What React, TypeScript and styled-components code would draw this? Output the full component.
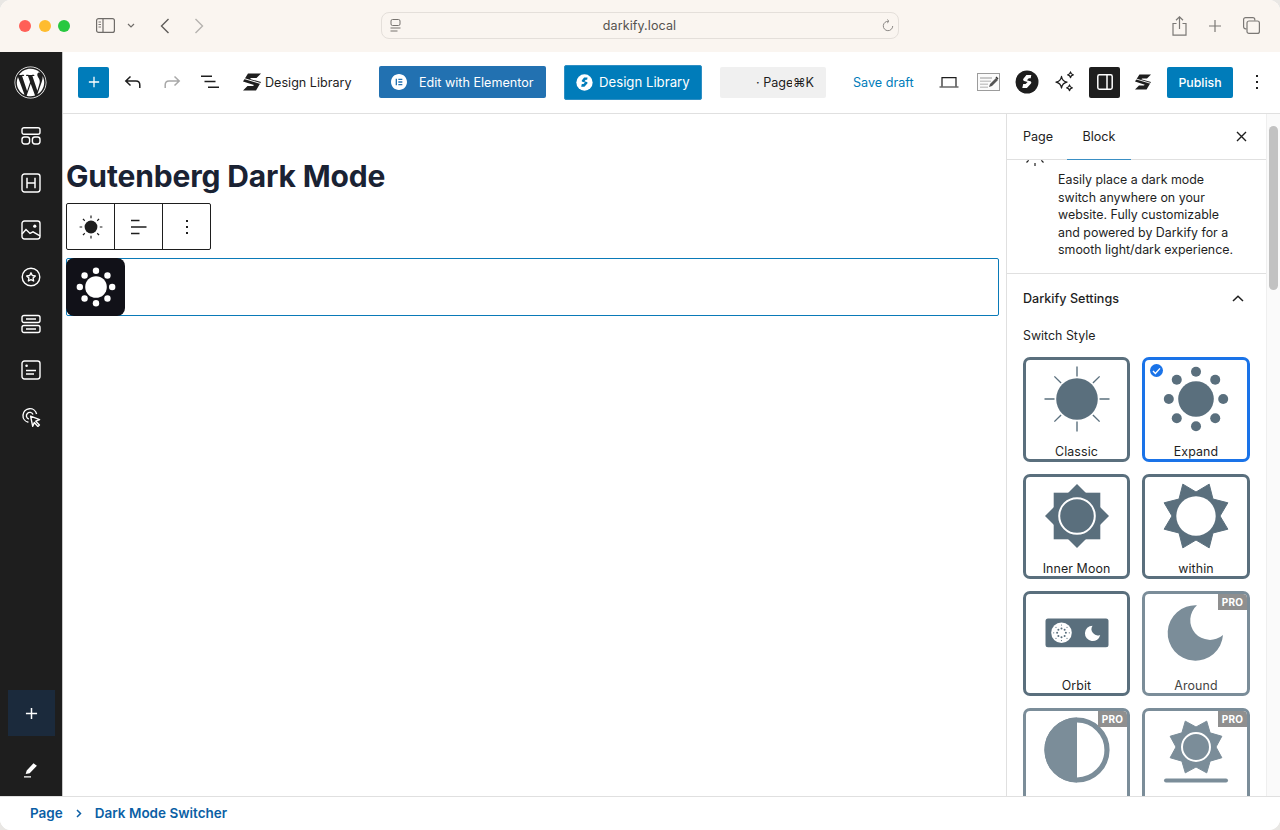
import React from "react";
import styled, { createGlobalStyle } from "styled-components";
import { FaWordpress } from "react-icons/fa";
import { SiElementor } from "react-icons/si";

const Global = createGlobalStyle`
  html, body { margin: 0; padding: 0; background: #e9e7e4; }
  body { font-family: Inter, "Liberation Sans", sans-serif; color: #1e1e1e; -webkit-font-smoothing: antialiased; }
  * { box-sizing: border-box; }
`;

const Win = styled.div`
  width: 1280px; height: 830px; overflow: hidden; border-radius: 11px;
  display: flex; flex-direction: column; background: #fff;
`;
const Chrome = styled.header`
  height: 52px; flex: none; background: #faf5f0; display: flex; align-items: center; padding-left: 19px; padding-bottom: 1px;
`;
const Light = styled.span<{ $c: string }>`
  width: 12px; height: 12px; border-radius: 50%; background: ${p => p.$c}; margin-right: 7.5px; flex: none;
`;
const ChromeSlot = styled.span<{ $w: number; $ml?: number; $gray?: boolean }>`
  width: ${p => p.$w}px; margin-left: ${p => p.$ml ?? 0}px; flex: none; display: flex; align-items: center; justify-content: center;
  color: ${p => (p.$gray ? "#b5b2af" : "#6f6c69")};
`;
const Address = styled.div`
  width: 518px; height: 27px; margin-left: 176px; flex: none; border: 1px solid #e4dfda; border-radius: 8px;
  display: flex; align-items: center; justify-content: space-between; padding: 0 1px 0 8px; font-size: 12.5px; color: #55524f; letter-spacing: .1px;
`;
const Body = styled.div`flex: 1; display: flex; min-height: 0;`;
const Rail = styled.nav`
  width: 63px; flex: none; background: #1e1e1e; border-right: 1px solid #c9c9c9; display: flex; flex-direction: column; color: #fff;
`;
const RailLogo = styled.div`height: 61px; flex: none; display: flex; align-items: center; justify-content: center; padding-right: 1px;`;
const RailItem = styled.div`
  height: 46.8px; width: 62px; flex: none; display: flex; align-items: center; justify-content: center;
`;
const RailSpacer = styled.div`flex: 1;`;
const RailAdd = styled.div`
  width: 47px; height: 46px; margin-left: 8px; background: #1b2a3c; display: flex; align-items: center; justify-content: center; flex: none;
`;
const RailEdit = styled.div`height: 60px; flex: none; display: flex; align-items: center; justify-content: center; padding-right: 1px; padding-top: 8px;`;
const Column = styled.div`flex: 1; min-width: 0; display: flex; flex-direction: column;`;
const TopBar = styled.div`
  height: 62px; flex: none; border-bottom: 1px solid #e0e0e0; display: flex; align-items: center; padding-left: 15px; padding-bottom: 1px;
  font-size: 13px;
`;
const Inserter = styled.div`
  width: 31px; height: 31px; background: #007cba; border-radius: 2px; color: #fff; flex: none; display: flex; align-items: center; justify-content: center;
`;
const Slot = styled.div<{ $w: number; $ml?: number }>`
  width: ${p => p.$w}px; margin-left: ${p => p.$ml ?? 0}px; height: 32px; flex: none; display: flex; align-items: center; justify-content: center;
`;
const LibLabel = styled.span`font-size: 12.6px; color: #1e1e1e; width: 114px; margin-left: 4px; flex: none; white-space: nowrap;`;
const ElementorBtn = styled.div`
  width: 167px; height: 32px; background: #2271b1; border-radius: 2px; flex: none; color: #fff; display: flex; align-items: center; padding-left: 12px; gap: 12px; font-size: 12.6px;
  svg { flex: none; }
`;
const LibraryBtn = styled.div`
  width: 138px; height: 35px; margin-left: 18px; background: #007cba; border: 1px solid #2f8fc4; border-radius: 2px; flex: none; color: #fff; display: flex; align-items: center; padding-left: 11px; gap: 6px; font-size: 13.2px;
`;
const Search = styled.div`
  width: 106px; height: 31px; margin-left: 18px; background: #f0f0f0; border-radius: 2px; flex: none; display: flex; align-items: center; padding-left: 36px; font-size: 12.6px; color: #1e1e1e;
`;
const SearchText = styled.span`width: 36px; overflow: hidden; white-space: nowrap; flex: none; margin-right: 1px;`;
const SaveDraft = styled.span`font-size: 12.6px; color: #007cba; margin-left: 27px; width: 60px; white-space: nowrap; flex: none;`;
const ActiveSlot = styled.div`
  width: 31px; height: 31px; border-radius: 2px; background: #1e1e1e; color: #fff; flex: none; margin-left: 13px; display: flex; align-items: center; justify-content: center;
`;
const Publish = styled.div`
  width: 66px; height: 31px; margin-left: 16px; background: #007cba; color: #fff; border-radius: 2px; flex: none; display: flex; align-items: center; justify-content: center; font-size: 12.3px; font-weight: 500;
`;
const Main = styled.div`flex: 1; min-height: 0; display: flex;`;
const Canvas = styled.main`flex: 1; min-width: 0; padding: 0 7px 0 3px;`;
const Title = styled.h1`
  margin: 44px 0 0; font-size: 30px; line-height: 36px; font-weight: 700; color: #1a2233; letter-spacing: -.15px; height: 45px;
`;
const BlockTools = styled.div`
  width: 145px; height: 47px; border: 1px solid #1e1e1e; border-radius: 2px; display: flex; background: #fff;
`;
const ToolCell = styled.div`
  flex: 1; display: flex; align-items: center; justify-content: center;
  & + & { border-left: 1px solid #1e1e1e; }
`;
const BlockFrame = styled.div`
  margin-top: 8px; height: 58px; border: 1px solid #0a7ab8; border-radius: 2px; display: flex; background: #fff;
`;
const SwitchBox = styled.div`
  width: 59px; height: 58px; margin: -1px 0 0 -1px; background: #111118; border-radius: 8px; display: flex; align-items: center; justify-content: center; flex: none;
`;
const Panel = styled.aside`
  width: 260px; flex: none; border-left: 1px solid #e0e0e0; display: flex; flex-direction: column; min-height: 0;
`;
const Tabs = styled.div`
  height: 46px; flex: none; border-bottom: 1px solid #e0e0e0; display: flex; align-items: center; padding-left: 16px; font-size: 12.6px;
`;
const Tab = styled.span<{ $active?: boolean; $w: number }>`
  width: ${p => p.$w}px; height: 46px; display: flex; align-items: center; flex: none; justify-content: ${p => (p.$active ? "center" : "flex-start")};
  border-bottom: ${p => (p.$active ? "1.5px solid #3a8fc4" : "0")};
`;
const TabClose = styled.span`margin-left: auto; margin-right: 19px; display: flex;`;
const PanelScroll = styled.div`flex: 1; min-height: 0; overflow: hidden;`;
const Intro = styled.div`
  height: 114px; border-bottom: 1px solid #e0e0e0; display: flex; padding: 0 0 0 18px;
`;
const IntroIcon = styled.div`width: 33px; flex: none; height: 8px; overflow: hidden; display: flex; align-items: flex-end;`;
const IntroText = styled.p`
  margin: 11px 0 0; font-size: 12.4px; line-height: 17.6px; color: #1e1e1e; width: 205px; white-space: nowrap;
`;
const SectionHead = styled.div`
  height: 48px; padding: 0 22px 0 16px; display: flex; align-items: center; justify-content: space-between; font-size: 12.6px; font-weight: 500; color: #1e1e1e;
`;
const FieldLabel = styled.div`padding: 6px 16px 0; font-size: 12.4px; height: 35px; color: #1e1e1e;`;
const Grid = styled.div`
  display: grid; grid-template-columns: 107px 108px; gap: 12px; padding-left: 16px;
`;
const Card = styled.div<{ $on?: boolean; $pro?: boolean }>`
  position: relative; height: 105px; border: 3px solid ${p => (p.$on ? "#1a73e8" : p.$pro ? "#7b8d99" : "#5a6f7d")}; border-radius: 7px;
  display: flex; flex-direction: column; align-items: center; font-size: 12.4px; color: ${p => (p.$pro ? "#444" : "#1e1e1e")}; overflow: hidden; background: #fff;
`;
const CardArt = styled.div`height: 80px; width: 100%; flex: none; display: flex; align-items: center; justify-content: center; margin-top: -1px;`;
const CardName = styled.span`line-height: 16px; margin-top: 5px; letter-spacing: .1px;`;
const Pro = styled.span`
  position: absolute; top: 0; right: 0; width: 29px; height: 16px; background: #8f8f8f; color: #fff; font-size: 10px; font-weight: 700; letter-spacing: .3px;
  display: flex; align-items: center; justify-content: center; border-radius: 0 3px 0 0;
`;
const Check = styled.span`
  position: absolute; top: 4px; left: 5px; width: 13px; height: 13px; border-radius: 50%; background: #1a73e8; display: flex; align-items: center; justify-content: center;
`;
const ScrollTrack = styled.div`
  width: 14px; flex: none; background: #fafafa; border-left: 1px solid #efefef; padding: 12px 0 0 2px;
`;
const ScrollThumb = styled.div`width: 9px; height: 164px; border-radius: 5px; background: #c2c2c2;`;
const Footer = styled.footer`
  height: 34px; flex: none; border-top: 1px solid #e0e0e0; background: #fff; display: flex; align-items: center; padding: 0 0 1px 30px; font-size: 13.5px; font-weight: 600; color: #0b5fa5;
`;
const Crumb = styled.span`display: flex; width: 32px; justify-content: center; flex: none;`;

/* ---------- drawings ---------- */
const I = styled.svg`display: block; flex: none;`;

const SLogo = ({ c = "#1e1e1e", w = 18 }: { c?: string; w?: number }) => (
  <I width={w} height={w} viewBox="0 0 18 18" fill={c}>
    <path d="M5 .5h13l-4.500 4.500H8l-1 1 11 3-5 8.500H0l4.500-4.500H10l1-1L0 8.500z" />
    <path d="M1 5.500l16.500 5" stroke="#fff" strokeWidth="1" fill="none" />
  </I>
);
const SCircle = () => (
  <I width="24" height="24" viewBox="0 0 24 24">
    <circle cx="12" cy="12" r="11.500" fill="#1e1e1e" />
    <path d="M15.700 5.500h-4.900l-3 3.600c-.6.800-.3 1.900.7 2.200l3.500 1-2 2.200H7.600l-.9 4h4.600l4.100-4.600c.7-.9.3-2-.7-2.300l-3.400-.9 1.900-2.100h1.900z" fill="#fff" transform="translate(.6 -.4)" />
  </I>
);
const Rays = ({ cx, cy, r0, r1, diag0, diag1, c, sw }: { cx: number; cy: number; r0: number; r1: number; diag0?: number; diag1?: number; c: string; sw: number }) => (
  <g stroke={c} strokeWidth={sw}>
    {[0, 45, 90, 135, 180, 225, 270, 315].map(a => {
      const t = (a * Math.PI) / 180;
      const d = a % 90 !== 0;
      const i = d && diag0 ? diag0 : r0;
      const o = d && diag1 ? diag1 : r1;
      return <line key={a} x1={cx + Math.cos(t) * i} y1={cy + Math.sin(t) * i} x2={cx + Math.cos(t) * o} y2={cy + Math.sin(t) * o} />;
    })}
  </g>
);
const dots = (cx: number, cy: number, d: number, r: number, c: string) =>
  [0, 45, 90, 135, 180, 225, 270, 315].map(a => {
    const t = (a * Math.PI) / 180;
    return <circle key={a} cx={cx + Math.cos(t) * d} cy={cy + Math.sin(t) * d} r={r} fill={c} />;
  });
const star = (cx: number, cy: number, ro: number, ri: number, off: number) => {
  const pts: string[] = [];
  for (let k = 0; k < 16; k++) {
    const t = ((off + k * 22.5 - 90) * Math.PI) / 180;
    const r = k % 2 === 0 ? ro : ri;
    pts.push(`${(cx + Math.cos(t) * r).toFixed(2)},${(cy + Math.sin(t) * r).toFixed(2)}`);
  }
  return pts.join(" ");
};
const ART = "#5a6f7d";
const ART_PRO = "#7b8d99";

const ClassicArt = () => (
  <I width="70" height="70" viewBox="0 0 70 70">
    <Rays cx={35} cy={35} r0={22.5} r1={32.5} diag0={22.5} diag1={32} c={ART} sw={1.4} />
    <circle cx="35" cy="35" r="20.8" fill={ART} />
  </I>
);
const ExpandArt = () => (
  <I width="70" height="70" viewBox="0 0 70 70">
    <circle cx="35" cy="35" r="17.8" fill={ART} />
    {dots(35, 35, 27.2, 5, ART)}
  </I>
);
const InnerMoonArt = () => (
  <I width="70" height="70" viewBox="0 0 70 70">
    <rect x="11.7" y="11.7" width="46.6" height="46.6" fill={ART} />
    <polygon points="35,3 67,35 35,67 3,35" fill={ART} />
    <circle cx="35" cy="35" r="17.8" fill={ART} stroke="#fff" strokeWidth="2" />
  </I>
);
const WithinArt = () => (
  <I width="70" height="70" viewBox="0 0 70 70">
    <polygon points={star(35, 35, 34.5, 24, 22.5)} fill={ART} stroke={ART} strokeWidth="1" strokeLinejoin="round" />
    <circle cx="35" cy="35" r="19.7" fill="#fff" />
  </I>
);
const OrbitArt = () => (
  <I width="64" height="30" viewBox="0 0 64 30">
    <rect x="0.5" y="0.5" width="63" height="28.7" rx="2.5" fill={ART} />
    <circle cx="16.5" cy="14.8" r="10.3" fill="#fff" />
    {dots(16.5, 14.8, 4.4, 1, ART)}
    {dots(16.5, 14.8, 7.8, 0.6, ART)}
    <path d="M47.5 7.7a7.7 7.7 0 1 0 7.7 9.2 6.3 6.3 0 0 1-7.7-9.2z" fill="#fff" />
  </I>
);
const AroundArt = () => (
  <I width="70" height="70" viewBox="0 0 70 70">
    <path d="M36 7.3A27.7 27.7 0 1 0 62 37 19.500 19.500 0 1 1 36 7.300z" fill={ART_PRO} />
  </I>
);
const HalfArt = () => (
  <I width="70" height="70" viewBox="0 0 70 70">
    <circle cx="35" cy="35" r="30" fill="#fff" stroke={ART_PRO} strokeWidth="5.2" />
    <path d="M35 2.4a32.6 32.6 0 0 0 0 65.2z" fill={ART_PRO} />
  </I>
);
const HorizonArt = () => (
  <I width="70" height="70" viewBox="0 0 70 70">
    <polygon points={star(35, 32, 28, 20, 22.5)} fill={ART_PRO} stroke={ART_PRO} strokeWidth="1" strokeLinejoin="round" />
    <circle cx="35" cy="32" r="14" fill={ART_PRO} stroke="#fff" strokeWidth="2" />
    <rect x="3" y="63.5" width="64" height="4" rx="2" fill={ART_PRO} />
  </I>
);

const ICON = { fill: "none", stroke: "#fff", strokeWidth: 1.4 };
const Patterns = () => (
  <I width="20" height="20" viewBox="0 0 20 20" {...ICON}>
    <rect x="1" y="1.7" width="18" height="6.6" rx="2" />
    <rect x="1" y="11" width="7.6" height="7" rx="2.4" />
    <rect x="11.4" y="11" width="7.6" height="7" rx="2.4" />
  </I>
);
const Heading = () => (
  <I width="20" height="20" viewBox="0 0 20 20" {...ICON}>
    <rect x="1" y="1" width="18" height="18" rx="2.4" />
    <path d="M6 4.8v10.4M14 4.8v10.4M6 10h8" strokeWidth="1.5" />
  </I>
);
const ImageI = () => (
  <I width="20" height="20" viewBox="0 0 20 20" {...ICON}>
    <rect x="1" y="1" width="18" height="18" rx="2.4" />
    <path d="M1 14l4-4.4 4 3.8 3-1.6 7 4" />
    <circle cx="13.8" cy="6.2" r="1.6" fill="#fff" stroke="none" />
  </I>
);
const StarCircle = () => (
  <I width="20" height="20" viewBox="0 0 20 20" {...ICON}>
    <circle cx="10" cy="10" r="8.8" />
    <path d="M10 5.8l1.3 2.7 3 .4-2.2 2.1.5 3L10 12.6 7.4 14l.5-3-2.2-2.1 3-.4z" strokeLinejoin="round" />
  </I>
);
const Rows = () => (
  <I width="20" height="20" viewBox="0 0 20 20" {...ICON}>
    <rect x="1" y="1.5" width="18" height="7" rx="2" />
    <rect x="1" y="11.5" width="18" height="7" rx="2" />
    <path d="M5 5h10M5 15h10" />
  </I>
);
const FormI = () => (
  <I width="20" height="20" viewBox="0 0 20 20" {...ICON}>
    <rect x="1" y="1" width="18" height="18" rx="2.4" />
    <circle cx="5.6" cy="5.8" r="1.3" fill="#fff" stroke="none" />
    <path d="M5 10.4h10M5 14h8" strokeWidth="1.5" />
  </I>
);
const Pointer = () => (
  <I width="20" height="20" viewBox="0 0 20 20" {...ICON}>
    <path d="M7.4 15.3A6.9 6.9 0 1 1 15.6 7" />
    <path d="M7.8 12a3.4 3.4 0 1 1 4.2-4.4" />
    <path d="M9.6 9.2l9 3.4-3.8 1.6 3.6 3.8-1.5 1.4-3.6-3.8-1.6 3.7z" strokeLinejoin="round" />
  </I>
);
const PlusI = ({ s = 14, c = "#fff", sw = 1.5 }: { s?: number; c?: string; sw?: number }) => (
  <I width={s} height={s} viewBox="0 0 14 14" fill="none" stroke={c} strokeWidth={sw}>
    <path d="M7 1v12M1 7h12" />
  </I>
);
const Undo = ({ c, flip }: { c: string; flip?: boolean }) => (
  <I width="18" height="14" viewBox="0 0 18 14" fill="none" stroke={c} strokeWidth="1.5" style={flip ? { transform: "scaleX(-1)" } : undefined}>
    <path d="M6.5 1.5L1.8 6l4.7 4.5M2 6h10c2.4 0 3.8 1.6 3.8 4v3" />
  </I>
);
const ListView = () => (
  <I width="18" height="14" viewBox="0 0 18 14" fill="none" stroke="#1e1e1e" strokeWidth="1.5">
    <path d="M0 1.3h11M3.500 6.600h11M7 12.300h11" />
  </I>
);
const Laptop = () => (
  <I width="20" height="12" viewBox="0 0 20 12" fill="none" stroke="#1e1e1e" strokeWidth="1.2">
    <path d="M3 10.200V1.600h14v8.600M.5 11h19" />
  </I>
);
const Notes = () => (
  <I width="23" height="18" viewBox="0 0 23 18">
    <rect x=".5" y=".5" width="22" height="17" fill="#fbfbfb" stroke="#9c9c9c" />
    <path d="M3 4h12v2H3zM3 7.500h11v1.500H3zM3 10.500h8V12H3zM3 13.500h8V15H3z" fill="#c9c9c9" />
    <path d="M12 14l1-3 6-6 2 2-6 6z" fill="#555" />
    <path d="M19.500 3.500l2 2-1 1-2-2z" fill="#333" />
  </I>
);
const Sparkles = () => (
  <I width="21" height="22" viewBox="0 0 21 22" fill="none" stroke="#1e1e1e" strokeWidth="1.3" strokeLinejoin="round">
    <path d="M7.500 5.500c.6 3.500 2 5 5.500 5.700-3.500.7-4.900 2.200-5.500 5.800-.6-3.600-2-5.100-5.500-5.800 3.500-.7 4.900-2.200 5.500-5.700z" transform="translate(-1 0)" />
    <path d="M15.500 1c.3 1.700 1 2.400 2.800 2.800-1.800.3-2.500 1-2.800 2.800-.3-1.800-1-2.500-2.800-2.800 1.800-.4 2.500-1.100 2.800-2.800zM14.500 14c.3 1.700 1 2.400 2.800 2.800-1.800.3-2.500 1-2.800 2.800-.3-1.800-1-2.500-2.800-2.800 1.800-.4 2.500-1.100 2.800-2.800z" />
  </I>
);
const PanelToggle = ({ c = "#fff" }: { c?: string }) => (
  <I width="16" height="16" viewBox="0 0 16 16" fill="none" stroke={c} strokeWidth="1.5">
    <rect x=".8" y=".8" width="14.400" height="14.400" rx="1.6" />
    <path d="M10 1v14" />
  </I>
);
const Kebab = ({ c = "#1e1e1e" }: { c?: string }) => (
  <I width="4" height="16" viewBox="0 0 4 16" fill={c}>
    <rect x="1" y="1" width="2" height="2" />
    <rect x="1" y="7" width="2" height="2" />
    <rect x="1" y="13" width="2" height="2" />
  </I>
);
const SmallSun = () => (
  <I width="24" height="24" viewBox="0 0 24 24">
    <circle cx="12" cy="12" r="6.400" fill="#1e1e1e" />
    <Rays cx={12} cy={12} r0={8.800} r1={11.400} c="#1e1e1e" sw={1.200} />
  </I>
);
const AlignI = () => (
  <I width="18" height="16" viewBox="0 0 18 16" stroke="#1e1e1e" strokeWidth="1.500">
    <path d="M1 1.500h8.500M1 8h15.500M1 14.500h8.500" />
  </I>
);

const SIDEBAR_ICONS = [Patterns, Heading, ImageI, StarCircle, Rows, FormI, Pointer];

const cards: { key: string; name?: string; Art: React.FC; on?: boolean; pro?: boolean }[] = [
  { key: "classic", name: "Classic", Art: ClassicArt },
  { key: "expand", name: "Expand", Art: ExpandArt, on: true },
  { key: "inner", name: "Inner Moon", Art: InnerMoonArt },
  { key: "within", name: "within", Art: WithinArt },
  { key: "orbit", name: "Orbit", Art: OrbitArt },
  { key: "around", name: "Around", Art: AroundArt, pro: true },
  { key: "half", Art: HalfArt, pro: true },
  { key: "horizon", Art: HorizonArt, pro: true },
];

function SCircleWhite() {
  return (
    <I width="17" height="17" viewBox="0 0 24 24">
      <circle cx="12" cy="12" r="11.500" fill="#fff" />
      <path d="M15.700 5.500h-4.900l-3 3.600c-.6.800-.3 1.900.7 2.200l3.500 1-2 2.200H7.600l-.9 4h4.600l4.100-4.600c.7-.9.300-2-.7-2.300l-3.400-.9 1.900-2.100h1.900z" fill="#007cba" transform="translate(.6 -.4)" />
    </I>
  );
}

export default function App() {
  return (
    <Win>
      <Global />
      <Chrome>
        <Light $c="#ff5f57" />
        <Light $c="#febc2e" />
        <Light $c="#28c840" />
        <ChromeSlot $w={20} $ml={18}>
          <I width="19" height="15" viewBox="0 0 19 15" fill="none" stroke="currentColor" strokeWidth="1.200">
            <rect x=".6" y=".6" width="17.800" height="13.800" rx="2" />
            <path d="M7 1v13" />
            <path d="M2.500 4h2.500M2.500 6.500h2.500M2.500 9h2.500" strokeWidth=".9" />
          </I>
        </ChromeSlot>
        <ChromeSlot $w={8} $ml={11}>
          <I width="8" height="5" viewBox="0 0 8 5" fill="none" stroke="currentColor" strokeWidth="1.200"><path d="M1 1l3 3 3-3" /></I>
        </ChromeSlot>
        <ChromeSlot $w={12} $ml={24}>
          <I width="10" height="16" viewBox="0 0 10 16" fill="none" stroke="#5f5c59" strokeWidth="1.400"><path d="M8.500 1L1.500 8l7 7" /></I>
        </ChromeSlot>
        <ChromeSlot $w={12} $ml={22} $gray>
          <I width="10" height="16" viewBox="0 0 10 16" fill="none" stroke="currentColor" strokeWidth="1.400"><path d="M1.500 1l7 7-7 7" /></I>
        </ChromeSlot>
        <Address>
          <I width="11" height="13" viewBox="0 0 11 13" fill="none" stroke="#77736f" strokeWidth="1">
            <rect x="1" y=".5" width="9" height="6" rx="1.500" />
            <path d="M.5 9h10M.5 12h7" />
          </I>
          <span>darkify.local</span>
          <ChromeSlot $w={18}>
            <I width="12" height="13" viewBox="0 0 12 13" fill="none" stroke="#8b8885" strokeWidth="1">
              <path d="M6.500 2.300A4.700 4.700 0 1 0 10.700 7M5.200 .5l1.800 1.800L5.200 4" />
            </I>
          </ChromeSlot>
        </Address>
        <ChromeSlot $w={16} $ml={273}>
          <I width="15" height="20" viewBox="0 0 15 20" fill="none" stroke="#7b7875" strokeWidth="1.200">
            <path d="M4.500 7.500H1v11.700h13V7.500h-3.500M7.500 13V1M4 4.200L7.500.8 11 4.200" />
          </I>
        </ChromeSlot>
        <ChromeSlot $w={16} $ml={19}>
          <PlusI s={14} c="#7b7875" sw={1.200} />
        </ChromeSlot>
        <ChromeSlot $w={18} $ml={20}>
          <I width="17" height="17" viewBox="0 0 17 17" fill="none" stroke="#7b7875" strokeWidth="1.200">
            <path d="M3.500 11.800H2.600A2 2 0 0 1 .6 9.800V2.600a2 2 0 0 1 2-2h7.200a2 2 0 0 1 2 2v.900" />
            <rect x="4" y="4" width="12.400" height="12.400" rx="2" />
          </I>
        </ChromeSlot>
      </Chrome>
      <Body>
        <Rail>
          <RailLogo><FaWordpress size={33} color="#fff" /></RailLogo>
          {SIDEBAR_ICONS.map((Ic, i) => (
            <RailItem key={i}><Ic /></RailItem>
          ))}
          <RailSpacer />
          <RailAdd><PlusI s={13} sw={1.600} /></RailAdd>
          <RailEdit>
            <I width="16" height="16" viewBox="0 0 16 16" fill="#fff">
              <path d="M10.500 1.200l3.400 2.600-7.200 7.400-3.900.9-.1-.1 1-3.400zM1 14.200h7v1.200H1z" />
            </I>
          </RailEdit>
        </Rail>
        <Column>
          <TopBar>
            <Inserter><PlusI s={12} sw={1.500} /></Inserter>
            <Slot $w={39} $ml={4}><Undo c="#1e1e1e" /></Slot>
            <Slot $w={39}><Undo c="#a8a8a8" flip /></Slot>
            <Slot $w={38}><ListView /></Slot>
            <Slot $w={18} $ml={14}><SLogo /></Slot>
            <LibLabel>Design Library</LibLabel>
            <ElementorBtn>
              <SiElementor size={16} color="#fff" />
              <span>Edit with Elementor</span>
            </ElementorBtn>
            <LibraryBtn>
              <SCircleWhite />
              <span>Design Library</span>
            </LibraryBtn>
            <Search>
              <SearchText>· Page</SearchText>
              <span>⌘K</span>
            </Search>
            <SaveDraft>Save draft</SaveDraft>
            <Slot $w={20} $ml={26}><Laptop /></Slot>
            <Slot $w={23} $ml={18}><Notes /></Slot>
            <Slot $w={24} $ml={15}><SCircle /></Slot>
            <Slot $w={21} $ml={16}><Sparkles /></Slot>
            <ActiveSlot><PanelToggle /></ActiveSlot>
            <Slot $w={16} $ml={15}><SLogo w={16} /></Slot>
            <Publish>Publish</Publish>
            <Slot $w={6} $ml={21}><Kebab /></Slot>
          </TopBar>
          <Main>
            <Canvas>
              <Title>Gutenberg Dark Mode</Title>
              <BlockTools>
                <ToolCell><SmallSun /></ToolCell>
                <ToolCell><AlignI /></ToolCell>
                <ToolCell><Kebab /></ToolCell>
              </BlockTools>
              <BlockFrame>
                <SwitchBox>
                  <I width="40" height="40" viewBox="0 0 40 40">
                    <circle cx="20" cy="20" r="10.800" fill="#fff" />
                    {dots(20, 20, 16.200, 3.200, "#fff")}
                  </I>
                </SwitchBox>
              </BlockFrame>
            </Canvas>
            <Panel>
              <Tabs>
                <Tab $w={44}>Page</Tab>
                <Tab $w={64} $active>Block</Tab>
                <TabClose>
                  <I width="11" height="11" viewBox="0 0 11 11" stroke="#1e1e1e" strokeWidth="1.400"><path d="M1 1l9 9M10 1l-9 9" /></I>
                </TabClose>
              </Tabs>
              <PanelScroll>
                <Intro>
                  <IntroIcon>
                    <I width="20" height="20" viewBox="0 0 20 20">
                      <Rays cx={10} cy={6} r0={9} r1={12} c="#1e1e1e" sw={1.200} />
                    </I>
                  </IntroIcon>
                  <IntroText>
                    Easily place a dark mode<br />
                    switch anywhere on your<br />
                    website. Fully customizable<br />
                    and powered by Darkify for a<br />
                    smooth light/dark experience.
                  </IntroText>
                </Intro>
                <SectionHead>
                  <span>Darkify Settings</span>
                  <I width="12" height="7" viewBox="0 0 12 7" fill="none" stroke="#1e1e1e" strokeWidth="1.500"><path d="M1 6l5-4.800L11 6" /></I>
                </SectionHead>
                <FieldLabel>Switch Style</FieldLabel>
                <Grid>
                  {cards.map(({ key, name, Art, on, pro }) => (
                    <Card key={key} $on={on} $pro={pro}>
                      {on && (
                        <Check>
                          <I width="9" height="8" viewBox="0 0 9 8" fill="none" stroke="#fff" strokeWidth="1.400"><path d="M1 4l2.400 2.400L8 1.400" /></I>
                        </Check>
                      )}
                      {pro && <Pro>PRO</Pro>}
                      <CardArt><Art /></CardArt>
                      {name && <CardName>{name}</CardName>}
                    </Card>
                  ))}
                </Grid>
              </PanelScroll>
            </Panel>
            <ScrollTrack><ScrollThumb /></ScrollTrack>
          </Main>
        </Column>
      </Body>
      <Footer>
        <span>Page</span>
        <Crumb>
          <I width="6" height="9" viewBox="0 0 6 9" fill="none" stroke="#0b5fa5" strokeWidth="1.500"><path d="M1 1l3.500 3.500L1 8" /></I>
        </Crumb>
        <span>Dark Mode Switcher</span>
      </Footer>
    </Win>
  );
}
